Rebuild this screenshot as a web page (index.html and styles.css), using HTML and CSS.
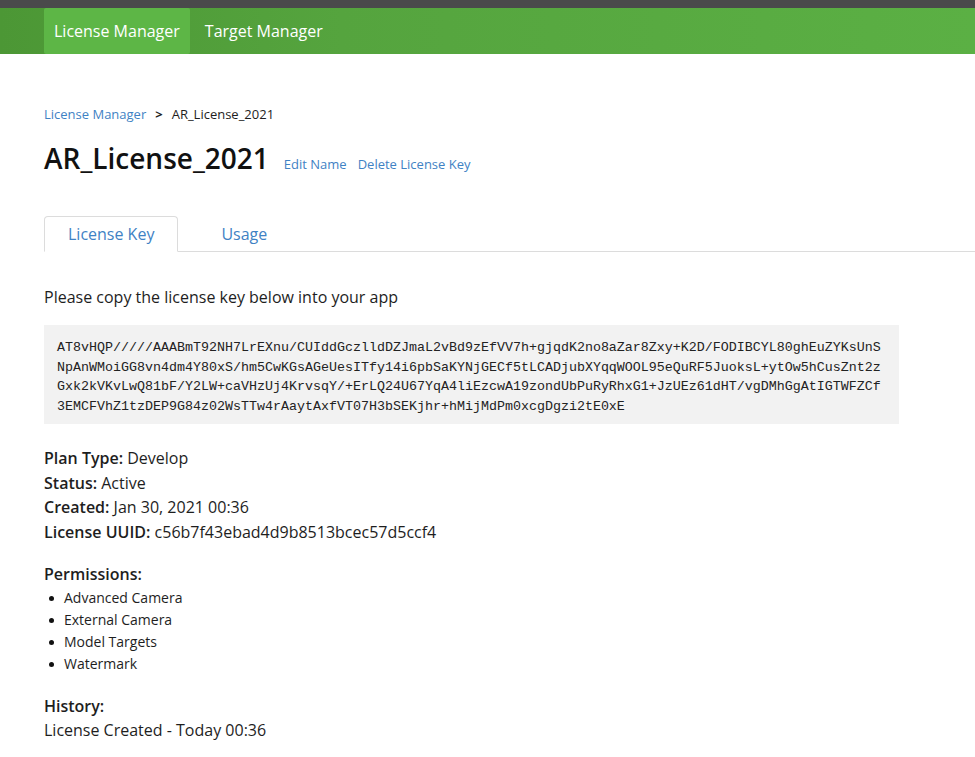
FILE: index.html
```html
<!DOCTYPE html>
<html lang="en">
<head>
<meta charset="utf-8">
<title>AR_License_2021 - License Manager</title>
<link rel="stylesheet" href="styles.css">
</head>
<body>
<div class="topbar"></div>
<nav class="nav">
  <a class="nav-item active" href="#">License Manager</a>
  <a class="nav-item" href="#">Target Manager</a>
</nav>
<main class="main">
  <div class="breadcrumb">
    <a href="#" class="crumb-link">License Manager</a>
    <span class="crumb-sep">&gt;</span>
    <span class="crumb-current">AR_License_2021</span>
  </div>
  <div class="title-row">
    <h1 class="title">AR_License_2021</h1>
    <a href="#" class="title-action">Edit Name</a>
    <a href="#" class="title-action">Delete License Key</a>
  </div>
  <div class="tabs">
    <a href="#" class="tab active">License Key</a>
    <a href="#" class="tab">Usage</a>
  </div>
  <p class="intro">Please copy the license key below into your app</p>
  <div class="keybox">AT8vHQP/////AAABmT92NH7LrEXnu/CUIddGczlldDZJmaL2vBd9zEfVV7h+gjqdK2no8aZar8Zxy+K2D/FODIBCYL80ghEuZYKsUnSNpAnWMoiGG8vn4dm4Y80xS/hm5CwKGsAGeUesITfy14i6pbSaKYNjGECf5tLCADjubXYqqWOOL95eQuRF5JuoksL+ytOw5hCusZnt2zGxk2kVKvLwQ81bF/Y2LW+caVHzUj4KrvsqY/+ErLQ24U67YqA4liEzcwA19zondUbPuRyRhxG1+JzUEz61dHT/vgDMhGgAtIGTWFZCf3EMCFVhZ1tzDEP9G84z02WsTTw4rAaytAxfVT07H3bSEKjhr+hMijMdPm0xcgDgzi2tE0xE</div>
  <div class="details">
    <div class="detail"><span class="label">Plan Type:</span> Develop</div>
    <div class="detail"><span class="label">Status:</span> Active</div>
    <div class="detail"><span class="label">Created:</span> Jan 30, 2021 00:36</div>
    <div class="detail"><span class="label">License UUID:</span> c56b7f43ebad4d9b8513bcec57d5ccf4</div>
  </div>
  <div class="section">
    <div class="label">Permissions:</div>
    <ul class="perms">
      <li>Advanced Camera</li>
      <li>External Camera</li>
      <li>Model Targets</li>
      <li>Watermark</li>
    </ul>
  </div>
  <div class="section history">
    <div class="label">History:</div>
    <div class="detail">License Created - Today 00:36</div>
  </div>
</main>
</body>
</html>
```
FILE: styles.css
```css
* { box-sizing: border-box; }
html, body { margin: 0; padding: 0; background: #fff; }
body {
  font-family: "Open Sans", "Noto Sans", "DejaVu Sans", sans-serif;
  color: #1e1e1e;
  overflow-x: hidden;
}
a { text-decoration: none; }

.topbar { height: 8px; background: #4a4a4b; }

.nav {
  height: 46px;
  display: flex;
  gap: 5px;
  padding-left: 44px;
  background: linear-gradient(to right, #4c9735 0%, #55a43e 35%, #5bb044 100%);
}
.nav-item {
  display: flex;
  align-items: center;
  padding: 0 10px;
  color: #fff;
  font-size: 16px;
  border-radius: 2px;
}
.nav-item.active { background: #5db646; }

.main { padding-left: 44px; }

.breadcrumb {
  margin-top: 50px;
  font-size: 13px;
  line-height: 20px;
  display: flex;
  align-items: center;
}
.crumb-link { color: #3f82c4; }
.crumb-sep { font-weight: 700; margin: 0 9px 0 9px; color: #222; }
.crumb-current { color: #1e1e1e; }

.title-row {
  display: flex;
  align-items: baseline;
  margin-top: 16px;
}
.title {
  margin: 0;
  font-size: 28px;
  font-weight: 600;
  line-height: 36px;
  color: #111;
  margin-right: 15px;
}
.title-action { font-size: 13px; color: #3f82c4; margin-right: 11px; }

.tabs {
  display: flex;
  margin-top: 40px;
  border-bottom: 1px solid #dcdcdc;
  margin-right: -20px;
}
.tab {
  height: 36px;
  display: flex;
  align-items: center;
  padding: 0 23px;
  font-size: 16px;
  color: #3f82c4;
  border: 1px solid transparent;
  border-radius: 4px 4px 0 0;
  margin-bottom: -1px;
  margin-right: 19px;
}
.tab.active {
  border-color: #dcdcdc;
  border-bottom-color: #fff;
  background: #fff;
}

.intro {
  margin: 33px 0 0 0;
  font-size: 16px;
  line-height: 24px;
}

.keybox {
  margin-top: 16px;
  width: 855px;
  background: #f2f2f2;
  padding: 13px 13px 8px 13px;
  font-family: "Liberation Mono", "Courier New", monospace;
  font-size: 13.33px;
  line-height: 19.5px;
  color: #222;
  word-break: break-all;
}

.details { margin-top: 22px; }
.detail { font-size: 16px; line-height: 24.7px; }
.label { font-weight: 600; font-size: 16px; line-height: 24px; }

.section { margin-top: 17px; }
.perms {
  margin: 1px 0 0 0;
  padding-left: 5px;
  list-style: none;
  font-size: 14px;
  line-height: 22px;
}
.perms li { display: flex; align-items: center; }
.perms li::before {
  content: "";
  width: 5px;
  height: 5px;
  border-radius: 50%;
  background: #111;
  margin-right: 10px;
  margin-top: 1px;
}
.history { margin-top: 19px; }
```
